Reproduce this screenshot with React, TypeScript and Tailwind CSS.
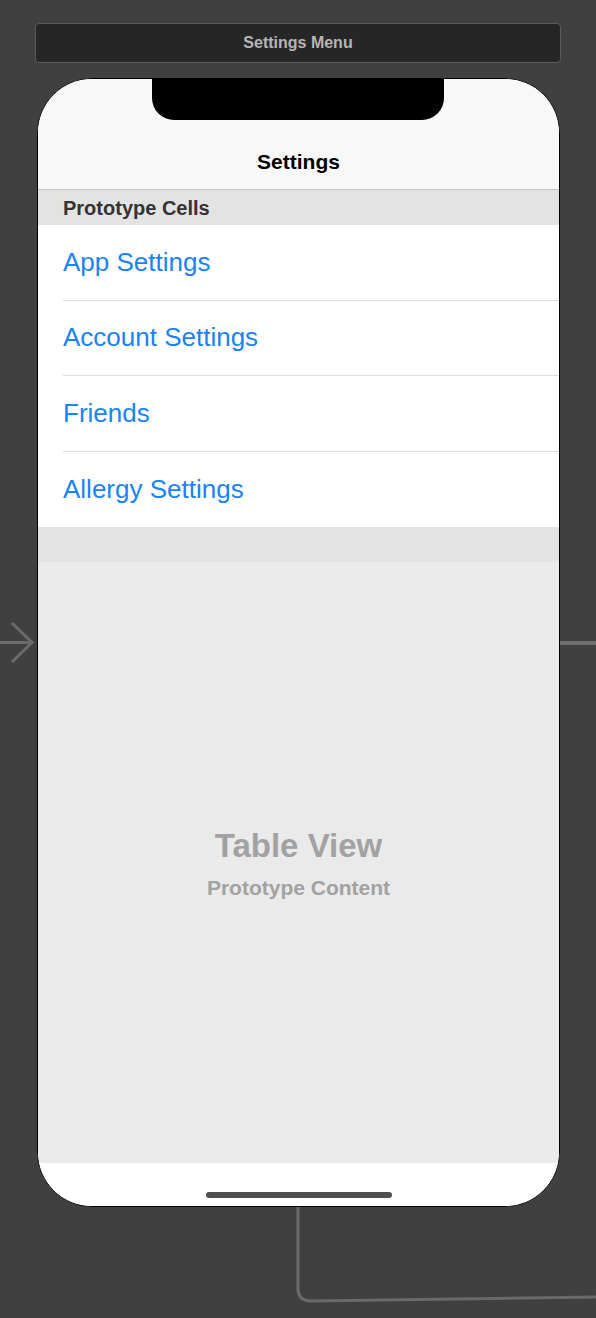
import React from 'react';

const cells = ['App Settings', 'Account Settings', 'Friends', 'Allergy Settings'];

const App: React.FC = () => {
  return (
    <div className="relative w-[596px] h-[1318px] overflow-hidden bg-[#404040] pt-[23px] font-['Liberation_Sans',Arial,sans-serif]">
      {/* scene title */}
      <div className="ml-[35px] w-[526px] h-[40px] rounded-[4px] border border-[#5a5a5a] bg-[#262626] flex items-center justify-center">
        <span className="text-[16px] font-bold text-[#b6b6b6]">Settings Menu</span>
      </div>

      {/* segue arrows / connectors */}
      <svg className="absolute left-0 top-[620px]" width="40" height="46" viewBox="0 0 40 46">
        <path d="M0 22.5 H32 M12 3 L32 22.5 L12 42" fill="none" stroke="#6b6b6b" strokeWidth="3" />
      </svg>
      <div className="absolute left-[560px] top-[641px] w-[36px] h-[4px] bg-[#6f6f6f]" />
      <svg className="absolute left-[290px] top-[1206px]" width="306" height="100" viewBox="0 0 306 100">
        <path d="M8 0 V82 Q8 95 21 95 L306 91" fill="none" stroke="#6a6a6a" strokeWidth="3" />
      </svg>

      {/* phone */}
      <div className="relative mt-[15px] ml-[37px] w-[523px] h-[1129px] rounded-[55px] border-[1.5px] border-black bg-white overflow-hidden flex flex-col">
        <div className="absolute left-[114px] top-0 w-[292px] h-[41px] bg-black rounded-b-[22px]" />

        <div className="h-[111px] shrink-0 bg-[#f8f8f8] border-b border-[#c4c4c4] flex items-end justify-center pb-[12px]">
          <span className="text-[21px] font-bold text-black">Settings</span>
        </div>

        <div className="h-[35px] shrink-0 bg-[#e3e3e3] pl-[25px] flex items-center">
          <span className="text-[20px] font-bold text-[#333333]">Prototype Cells</span>
        </div>

        <div className="shrink-0 bg-white">
          {cells.map((c, i) => (
            <div key={c} className="pl-[25px]">
              <div
                className={`h-[75.5px] flex items-center ${i < cells.length - 1 ? 'border-b border-[#dedede]' : ''}`}
              >
                <span className="text-[26px] text-[#1a82fb]">{c}</span>
              </div>
            </div>
          ))}
        </div>

        <div className="h-[35px] shrink-0 bg-[#e3e3e3]" />

        <div className="flex-1 bg-[#eaeaea] flex flex-col items-center justify-center pt-[2px]">
          <span className="text-[33px] font-bold text-[#a2a2a2] leading-none">Table View</span>
          <span className="text-[21px] font-bold text-[#a2a2a2] leading-none mt-[15px]">Prototype Content</span>
        </div>

        <div className="h-[43px] shrink-0 bg-white flex items-end justify-center pb-[8px]">
          <div className="w-[186px] h-[6px] rounded-full bg-[#4f4f4f]" />
        </div>
      </div>
    </div>
  );
};

export default App;
